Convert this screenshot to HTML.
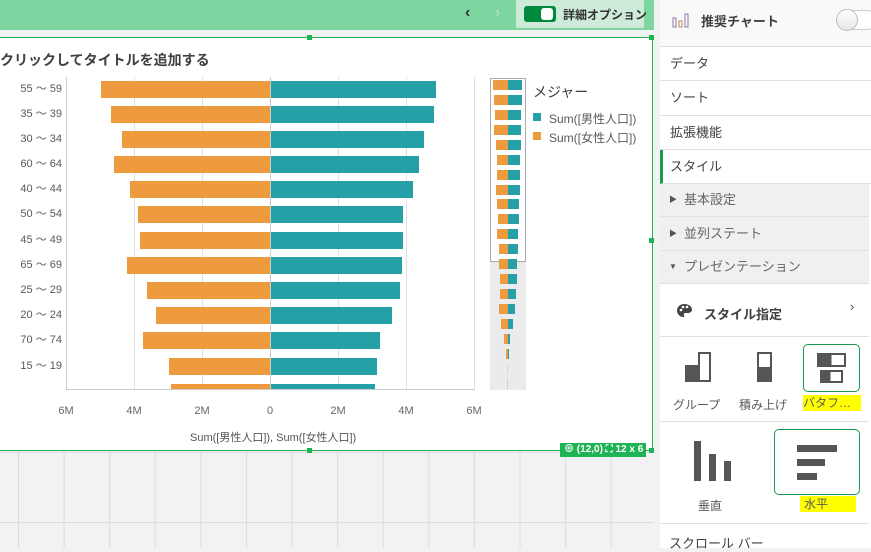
<!DOCTYPE html>
<html><head><meta charset="utf-8">
<style>
*{margin:0;padding:0;box-sizing:border-box}
body{width:871px;height:548px;overflow:hidden;position:relative;background:#f2f2f2;font-family:"Liberation Sans","Noto Sans CJK JP",sans-serif;color:#404040}
.a{position:absolute}
.lbl{position:absolute;left:0;width:62px;text-align:right;font-size:11px;color:#595959;line-height:12px}
.bo{position:absolute;height:17px;background:#ed9b3e}
.bt{position:absolute;height:17px;background:#26a0a7}
.gl{position:absolute;top:77px;width:1px;height:313px;background:#e0e0e0}
.tk{position:absolute;top:405px;width:30px;margin-left:-15px;text-align:center;font-size:11px;color:#666}
.mo{position:absolute;height:10px;background:#ed9b3e}
.mt{position:absolute;height:10px;background:#26a0a7}
.row{position:absolute;left:660px;width:211px;border-bottom:1px solid #e0e0e0;font-size:13px;color:#404040;padding-left:10px}
.sub{background:#f0f0f0;color:#666;padding-left:24px}
.tri{position:absolute;left:9px;font-size:8px;color:#555}
</style></head><body>
<div class="a" style="left:0;top:0;width:660px;height:30px;background:#7dd6a0"></div>
<div class="a" style="left:465px;top:4px;font-size:16px;color:#333;font-weight:bold">‹</div>
<div class="a" style="left:495px;top:4px;font-size:16px;color:#a8dcbc;font-weight:bold">›</div>
<div class="a" style="left:516px;top:0;width:128px;height:28px;background:#cdebd8"></div>
<div class="a" style="left:524px;top:6px;width:32px;height:16px;border-radius:3px;background:#008a3e"></div>
<div class="a" style="left:541px;top:8px;width:12px;height:12px;border-radius:3px;background:#fff"></div>
<div class="a" style="left:563px;top:6px;font-size:12px;font-weight:bold;color:#333">詳細オプション</div>
<div class="a" style="left:0;top:450px;width:660px;height:98px;background-image:linear-gradient(90deg,#dcdcdc 1px,transparent 1px),linear-gradient(#dcdcdc 1px,transparent 1px);background-size:45.6px 100%,100% 70px;background-position:18px 0,0 2px"></div>
<div class="a" style="left:-2px;top:37px;width:655px;height:414px;background:#fff;border:1px solid #1eb354;border-left:none"></div>
<div class="a" style="left:307px;top:35px;width:5px;height:5px;background:#1eb354"></div>
<div class="a" style="left:649px;top:35px;width:5px;height:5px;background:#1eb354"></div>
<div class="a" style="left:649px;top:238px;width:5px;height:5px;background:#1eb354"></div>
<div class="a" style="left:307px;top:448px;width:5px;height:5px;background:#1eb354"></div>
<div class="a" style="left:649px;top:448px;width:5px;height:5px;background:#1eb354"></div>
<div class="a" style="left:560px;top:443px;width:86px;height:14px;background:#1eb354;color:#fff;font-size:10px;font-weight:bold;line-height:14px;padding-left:4px">⊕ (12,0) ⛶ 12 x 6</div>
<div class="a" style="left:0;top:50px;font-size:14px;font-weight:bold;color:#404040">クリックしてタイトルを追加する</div>
<div class="gl" style="left:66px;background:#ccc"></div>
<div class="gl" style="left:134px"></div><div class="gl" style="left:202px"></div>
<div class="gl" style="left:270px;background:#ccc"></div>
<div class="gl" style="left:338px"></div><div class="gl" style="left:406px"></div><div class="gl" style="left:474px"></div>
<div class="a" style="left:66px;top:389px;width:409px;height:1px;background:#ccc"></div>
<div class="a" style="left:0;top:0;width:480px;height:389px;overflow:hidden">
<div class="lbl" style="top:83px">55 ～ 59</div><div class="bo" style="top:81px;left:101px;width:169px"></div><div class="bt" style="top:81px;left:270px;width:166px"></div>
<div class="lbl" style="top:108px">35 ～ 39</div><div class="bo" style="top:106px;left:111px;width:159px"></div><div class="bt" style="top:106px;left:270px;width:164px"></div>
<div class="lbl" style="top:133px">30 ～ 34</div><div class="bo" style="top:131px;left:122px;width:148px"></div><div class="bt" style="top:131px;left:270px;width:154px"></div>
<div class="lbl" style="top:158px">60 ～ 64</div><div class="bo" style="top:156px;left:114px;width:156px"></div><div class="bt" style="top:156px;left:270px;width:149px"></div>
<div class="lbl" style="top:183px">40 ～ 44</div><div class="bo" style="top:181px;left:130px;width:140px"></div><div class="bt" style="top:181px;left:270px;width:143px"></div>
<div class="lbl" style="top:208px">50 ～ 54</div><div class="bo" style="top:206px;left:138px;width:132px"></div><div class="bt" style="top:206px;left:270px;width:133px"></div>
<div class="lbl" style="top:234px">45 ～ 49</div><div class="bo" style="top:232px;left:140px;width:130px"></div><div class="bt" style="top:232px;left:270px;width:133px"></div>
<div class="lbl" style="top:259px">65 ～ 69</div><div class="bo" style="top:257px;left:127px;width:143px"></div><div class="bt" style="top:257px;left:270px;width:132px"></div>
<div class="lbl" style="top:284px">25 ～ 29</div><div class="bo" style="top:282px;left:147px;width:123px"></div><div class="bt" style="top:282px;left:270px;width:130px"></div>
<div class="lbl" style="top:309px">20 ～ 24</div><div class="bo" style="top:307px;left:156px;width:114px"></div><div class="bt" style="top:307px;left:270px;width:122px"></div>
<div class="lbl" style="top:334px">70 ～ 74</div><div class="bo" style="top:332px;left:143px;width:127px"></div><div class="bt" style="top:332px;left:270px;width:110px"></div>
<div class="lbl" style="top:360px">15 ～ 19</div><div class="bo" style="top:358px;left:169px;width:101px"></div><div class="bt" style="top:358px;left:270px;width:107px"></div>
<div class="bo" style="top:384px;left:171px;width:99px"></div><div class="bt" style="top:384px;left:270px;width:105px"></div>
</div>
<div class="a" style="left:270px;top:77px;width:1px;height:313px;background:#ccc"></div>
<div class="tk" style="left:66px">6M</div><div class="tk" style="left:134px">4M</div><div class="tk" style="left:202px">2M</div>
<div class="tk" style="left:270px">0</div><div class="tk" style="left:338px">2M</div><div class="tk" style="left:406px">4M</div><div class="tk" style="left:474px">6M</div>
<div class="a" style="left:190px;top:429px;font-size:11px;color:#555">Sum([男性人口]), Sum([女性人口])</div>
<div class="a" style="left:490px;top:262px;width:36px;height:128px;background:#ebebeb"></div>
<div class="a" style="left:490px;top:78px;width:36px;height:184px;border:1px solid #aaa"></div>
<div class="mo" style="left:493px;top:80px;width:15px"></div><div class="mt" style="left:508px;top:80px;width:14px"></div>
<div class="mo" style="left:494px;top:95px;width:14px"></div><div class="mt" style="left:508px;top:95px;width:14px"></div>
<div class="mo" style="left:495px;top:110px;width:13px"></div><div class="mt" style="left:508px;top:110px;width:13px"></div>
<div class="mo" style="left:494px;top:125px;width:14px"></div><div class="mt" style="left:508px;top:125px;width:13px"></div>
<div class="mo" style="left:496px;top:140px;width:12px"></div><div class="mt" style="left:508px;top:140px;width:13px"></div>
<div class="mo" style="left:497px;top:155px;width:11px"></div><div class="mt" style="left:508px;top:155px;width:12px"></div>
<div class="mo" style="left:497px;top:170px;width:11px"></div><div class="mt" style="left:508px;top:170px;width:12px"></div>
<div class="mo" style="left:496px;top:185px;width:12px"></div><div class="mt" style="left:508px;top:185px;width:12px"></div>
<div class="mo" style="left:497px;top:199px;width:11px"></div><div class="mt" style="left:508px;top:199px;width:11px"></div>
<div class="mo" style="left:498px;top:214px;width:10px"></div><div class="mt" style="left:508px;top:214px;width:11px"></div>
<div class="mo" style="left:497px;top:229px;width:11px"></div><div class="mt" style="left:508px;top:229px;width:10px"></div>
<div class="mo" style="left:499px;top:244px;width:9px"></div><div class="mt" style="left:508px;top:244px;width:10px"></div>
<div class="mo" style="left:499px;top:259px;width:9px"></div><div class="mt" style="left:508px;top:259px;width:9px"></div>
<div class="mo" style="left:500px;top:274px;width:8px"></div><div class="mt" style="left:508px;top:274px;width:9px"></div>
<div class="mo" style="left:500px;top:289px;width:8px"></div><div class="mt" style="left:508px;top:289px;width:8px"></div>
<div class="mo" style="left:499px;top:304px;width:9px"></div><div class="mt" style="left:508px;top:304px;width:7px"></div>
<div class="mo" style="left:501px;top:319px;width:7px"></div><div class="mt" style="left:508px;top:319px;width:5px"></div>
<div class="mo" style="left:504px;top:334px;width:4px"></div><div class="mt" style="left:508px;top:334px;width:2px"></div>
<div class="mo" style="left:506px;top:349px;width:2px"></div><div class="mt" style="left:508px;top:349px;width:1px"></div>
<div class="mo" style="left:507px;top:364px;width:1px;background:#ddb"></div>
<div class="mo" style="left:507px;top:379px;width:1px;background:#ccc"></div>
<div class="a" style="left:533px;top:82px;font-size:14px;color:#404040">メジャー</div>
<div class="a" style="left:533px;top:113px;width:8px;height:8px;background:#26a0a7"></div>
<div class="a" style="left:549px;top:110px;font-size:12px;color:#595959">Sum([男性人口])</div>
<div class="a" style="left:533px;top:132px;width:8px;height:8px;background:#ed9b3e"></div>
<div class="a" style="left:549px;top:129px;font-size:12px;color:#595959">Sum([女性人口])</div>
<div class="a" style="left:654px;top:0;width:6px;height:548px;background:#f2f2f2"></div>
<div class="a" style="left:660px;top:0;width:211px;height:548px;background:#fff"></div>
<div class="a" style="left:660px;top:0;width:211px;height:47px;background:#f9f9f9;border-bottom:1px solid #e0e0e0"></div>
<svg class="a" style="left:672px;top:12px" width="20" height="16" viewBox="0 0 20 16"><rect x="1" y="6" width="3" height="9" fill="none" stroke="#8a78b0"/><rect x="7" y="9" width="3" height="6" fill="none" stroke="#c08860"/><rect x="13" y="2" width="3" height="13" fill="none" stroke="#8a78b0"/></svg>
<div class="a" style="left:701px;top:11px;font-size:13px;font-weight:bold;color:#404040">推奨チャート</div>
<div class="a" style="left:837px;top:10px;width:40px;height:20px;border-radius:10px;border:1px solid #ccc;background:#fff"></div>
<div class="a" style="left:836px;top:9px;width:22px;height:22px;border-radius:50%;border:1px solid #bbb;background:linear-gradient(#fff,#e6e6e6)"></div>
<div class="row" style="top:47px;height:34px;line-height:33px">データ</div>
<div class="row" style="top:81px;height:35px;line-height:34px">ソート</div>
<div class="row" style="top:116px;height:34px;line-height:33px">拡張機能</div>
<div class="row" style="top:150px;height:34px;line-height:33px;border-left:3px solid #1a9a4e;padding-left:7px">スタイル</div>
<div class="row sub" style="top:184px;width:209px;height:33px;line-height:32px"><span class="tri">▶</span>基本設定</div>
<div class="row sub" style="top:217px;width:209px;height:34px;line-height:33px"><span class="tri">▶</span>並列ステート</div>
<div class="row sub" style="top:251px;width:209px;height:33px;line-height:32px"><span class="tri">▼</span>プレゼンテーション</div>
<svg class="a" style="left:677px;top:304px" width="15" height="14" viewBox="0 0 15 14"><path d="M7.5 0C3 0 0 3 0 6.5 0 10 3 13 6 13c1.5 0 1.5-1 1-2s0-2 1.5-2H11c2.5 0 4-1.5 4-3.5C15 2.5 11.5 0 7.5 0z" fill="#444"/><circle cx="4" cy="6" r="1.3" fill="#fff"/><circle cx="6" cy="3" r="1.3" fill="#fff"/><circle cx="10" cy="3" r="1.3" fill="#fff"/></svg>
<div class="a" style="left:704px;top:304px;font-size:13px;font-weight:bold;color:#404040">スタイル指定</div>
<div class="a" style="left:850px;top:299px;font-size:13px;color:#555">›</div>
<div class="a" style="left:660px;top:336px;width:209px;height:1px;background:#e0e0e0"></div>
<div class="a" style="left:685px;top:365px;width:13px;height:17px;background:#555"></div>
<div class="a" style="left:698px;top:352px;width:13px;height:30px;border:2px solid #555;background:#fff"></div>
<div class="a" style="left:757px;top:352px;width:15px;height:30px;border:2px solid #555;background:linear-gradient(#fff 50%,#555 50%)"></div>
<div class="a" style="left:803px;top:344px;width:57px;height:48px;border:1px solid #1a9a4e;border-radius:5px"></div>
<div class="a" style="left:817px;top:353px;width:29px;height:14px;border:2px solid #555;background:linear-gradient(90deg,#555 50%,#fff 50%)"></div>
<div class="a" style="left:820px;top:370px;width:23px;height:13px;border:2px solid #555;background:linear-gradient(90deg,#555 45%,#fff 45%)"></div>
<div class="a" style="left:673px;top:396px;font-size:12px;color:#595959">グループ</div>
<div class="a" style="left:739px;top:396px;font-size:12px;color:#595959">積み上げ</div>
<div class="a" style="left:803px;top:395px;width:58px;height:16px;background:#ffff00;font-size:12px;color:#595959;line-height:16px">バタフ…</div>
<div class="a" style="left:660px;top:421px;width:209px;height:1px;background:#e0e0e0"></div>
<div class="a" style="left:694px;top:441px;width:7px;height:40px;background:#555"></div>
<div class="a" style="left:709px;top:454px;width:7px;height:27px;background:#555"></div>
<div class="a" style="left:724px;top:461px;width:7px;height:20px;background:#555"></div>
<div class="a" style="left:774px;top:429px;width:86px;height:66px;border:1px solid #1a9a4e;border-radius:5px"></div>
<div class="a" style="left:797px;top:445px;width:40px;height:7px;background:#555"></div>
<div class="a" style="left:797px;top:459px;width:28px;height:7px;background:#555"></div>
<div class="a" style="left:797px;top:473px;width:20px;height:7px;background:#555"></div>
<div class="a" style="left:698px;top:497px;font-size:12px;color:#595959">垂直</div>
<div class="a" style="left:800px;top:496px;width:56px;height:16px;background:#ffff00;font-size:12px;color:#595959;line-height:16px;padding-left:4px">水平</div>
<div class="a" style="left:660px;top:523px;width:209px;height:1px;background:#e0e0e0"></div>
<div class="a" style="left:669px;top:533px;font-size:13px;color:#404040">スクロール バー</div>
</body></html>
